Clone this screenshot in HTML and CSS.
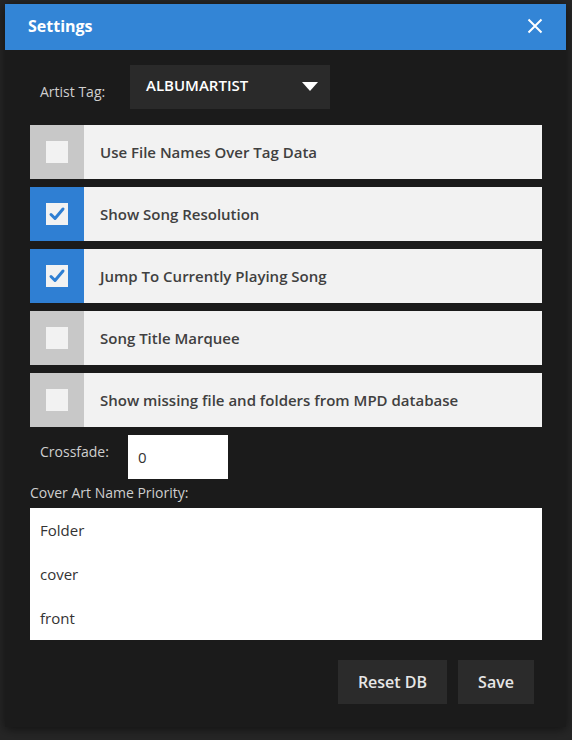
FILE: index.html
```html
<!DOCTYPE html>
<html>
<head>
<meta charset="utf-8">
<link rel="stylesheet" href="styles.css">
</head>
<body>
<div class="dialog">
  <div class="header">
    <span class="title">Settings</span>
    <svg class="close" width="16" height="16" viewBox="0 0 16 16"><path d="M1.5 1.5 L14.5 14.5 M14.5 1.5 L1.5 14.5" stroke="#fff" stroke-width="2" fill="none"/></svg>
  </div>
  <div class="content">
    <div class="artist">
      <span class="artist-label">Artist Tag:</span>
      <div class="select">
        <span>ALBUMARTIST</span>
        <svg width="16" height="9" viewBox="0 0 16 9"><path d="M0 0 H16 L8 9 Z" fill="#fff"/></svg>
      </div>
    </div>
    <div class="rows">
      <div class="row"><div class="cb"><div class="box"></div></div><div class="label">Use File Names Over Tag Data</div></div>
      <div class="row"><div class="cb on"><div class="box"><svg width="22" height="22" viewBox="0 0 22 22"><path d="M5 11.5 L9 15.5 L17 6" stroke="#2f7fd3" stroke-width="3" fill="none" stroke-linecap="round" stroke-linejoin="round"/></svg></div></div><div class="label">Show Song Resolution</div></div>
      <div class="row"><div class="cb on"><div class="box"><svg width="22" height="22" viewBox="0 0 22 22"><path d="M5 11.5 L9 15.5 L17 6" stroke="#2f7fd3" stroke-width="3" fill="none" stroke-linecap="round" stroke-linejoin="round"/></svg></div></div><div class="label">Jump To Currently Playing Song</div></div>
      <div class="row"><div class="cb"><div class="box"></div></div><div class="label">Song Title Marquee</div></div>
      <div class="row"><div class="cb"><div class="box"></div></div><div class="label">Show missing file and folders from MPD database</div></div>
    </div>
    <div class="crossfade">
      <span class="cf-label">Crossfade:</span>
      <div class="input">0</div>
    </div>
    <div class="cover-label">Cover Art Name Priority:</div>
    <div class="list">
      <div class="item">Folder</div>
      <div class="item">cover</div>
      <div class="item">front</div>
    </div>
    <div class="buttons">
      <div class="btn reset">Reset DB</div>
      <div class="btn save">Save</div>
    </div>
  </div>
</div>
</body>
</html>
```

FILE: styles.css
```css
html, body {
  margin: 0;
  padding: 0;
  background: #262626;
  font-family: "Open Sans", "Noto Sans", sans-serif;
}
body {
  padding: 4px 6px 0 5px;
  height: 740px;
  box-sizing: border-box;
}
.dialog {
  width: 561px;
  background: #1b1b1b;
  box-shadow: 0 2px 10px rgba(0,0,0,0.55);
}
.header {
  height: 46px;
  background: #3385d6;
  display: flex;
  align-items: center;
  justify-content: space-between;
  padding: 0 23px 2px 23px;
  box-sizing: border-box;
}
.title {
  color: #fff;
  font-weight: 700;
  font-size: 16px;
}
.close { display: block; }
.content {
  padding: 15px 24px 23px 25px;
}
.artist {
  display: flex;
  align-items: center;
  height: 44px;
}
.artist-label {
  color: #cfcfcf;
  font-size: 14px;
  width: 100px;
  padding-left: 10px;
  padding-top: 8px;
  box-sizing: border-box;
}
.select {
  width: 200px;
  height: 44px;
  background: #2a2a2a;
  display: flex;
  align-items: center;
  justify-content: space-between;
  padding: 0 12px 5px 16px;
  box-sizing: border-box;
  color: #fff;
  font-size: 15px;
  font-weight: 600;
}
.select svg { margin-top: 3px; }
.rows {
  margin-top: 16px;
  display: flex;
  flex-direction: column;
  gap: 8px;
}
.row {
  display: flex;
  height: 54px;
  background: #f2f2f2;
}
.cb {
  width: 54px;
  background: #c8c8c8;
  display: flex;
  align-items: center;
  justify-content: center;
}
.cb.on { background: #2f7fd3; }
.box {
  width: 22px;
  height: 22px;
  background: #f2f2f2;
}
.box svg { display: block; }
.label {
  display: flex;
  align-items: center;
  padding-left: 16px;
  color: #404040;
  font-size: 15px;
  font-weight: 600;
}
.crossfade {
  display: flex;
  align-items: flex-start;
  margin-top: 8px;
}
.cf-label {
  width: 98px;
  padding-left: 10px;
  box-sizing: border-box;
  color: #cfcfcf;
  font-size: 14px;
  padding-top: 7px;
}
.input {
  width: 100px;
  height: 44px;
  background: #fff;
  color: #333;
  font-size: 15px;
  display: flex;
  align-items: center;
  padding-left: 10px;
  box-sizing: border-box;
}
.cover-label {
  color: #cfcfcf;
  font-size: 14px;
  margin-top: 4px;
  line-height: 20px;
}
.list {
  margin-top: 5px;
  background: #fff;
  height: 132px;
}
.item {
  height: 44px;
  line-height: 44px;
  padding-left: 10px;
  box-sizing: border-box;
  color: #333;
  font-size: 15px;
}
.buttons {
  display: flex;
  justify-content: flex-end;
  gap: 11px;
  margin-top: 20px;
  padding-right: 8px;
}
.btn {
  height: 44px;
  background: #2b2b2b;
  color: #e6e6e6;
  font-size: 16px;
  font-weight: 600;
  display: flex;
  align-items: center;
  justify-content: center;
}
.reset { width: 109px; }
.save { width: 76px; }
```
